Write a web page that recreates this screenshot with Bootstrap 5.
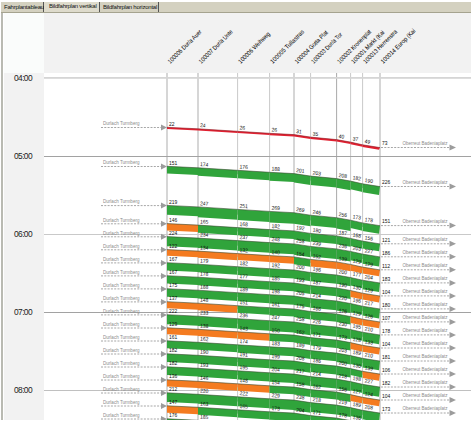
<!DOCTYPE html>
<html lang="de">
<head>
<meta charset="utf-8">
<meta name="viewport" content="width=device-width, initial-scale=1">
<title>Bildfahrplan vertikal</title>
<link href="https://cdn.jsdelivr.net/npm/bootstrap@5.3.0/dist/css/bootstrap.min.css" rel="stylesheet">
<style>
body{font-family:"Liberation Sans",Arial,sans-serif;background:#fff}
.app{width:471px;height:420px;padding:2px 0 0 1px}
.tabbar{height:11px;background:#d4d1c0;border-bottom:1px solid #a5a38f;font-size:6px;letter-spacing:-.23px;color:#111}
.tabbar .nav-link{padding:1px 0 0 3px;height:10px;color:#111;border-right:1px solid #555;white-space:nowrap;line-height:9px}
.tabbar .nav-link.active{background:#dedbcc;padding:0 0 0 5px}
.tab-a{width:43px}.tab-b{width:56px}.tab-c{width:59px}
.workspace{border-left:2px solid #b9bab2;height:407px}
.times{width:40px;margin-left:1px;background:#f2f2f2}
.corner{height:60px;background:#fafcfb}
.hour{height:78.1px;font-size:8.4px;line-height:10px;color:#222;text-align:center;letter-spacing:-.6px;padding-right:2px}
.stations{height:60px;background:#f2f2f2}
svg{display:block}
svg text{font-family:"Liberation Sans",Arial,sans-serif}
</style>
<script src="https://cdn.jsdelivr.net/npm/bootstrap@5.3.0/dist/js/bootstrap.bundle.min.js"></script>
</head>
<body>
<main class="app overflow-hidden">
  <nav class="nav tabbar flex-nowrap">
    <a class="nav-link tab-a" href="#">Fahrplantableau</a>
    <a class="nav-link tab-b active" href="#">Bildfahrplan vertikal</a>
    <a class="nav-link tab-c" href="#">Bildfahrplan horizontal</a>
  </nav>
  <div class="workspace d-flex overflow-hidden">
    <div class="times flex-shrink-0">
      <div class="corner"></div>
      <div class="hour">04:00</div><div class="hour">05:00</div><div class="hour">06:00</div><div class="hour">07:00</div><div class="hour">08:00</div>
    </div>
    <div class="flex-grow-1">
      <div class="stations"><svg id="heads" width="427" height="60" viewBox="44 13 427 60"></svg></div>
      <svg id="plan" width="427" height="347" viewBox="44 73 427 347"></svg>
    </div>
  </div>
</main>
<script>
const NS = 'http://www.w3.org/2000/svg';
const heads = document.getElementById('heads'), plan = document.getElementById('plan');
function add(parent, tag, attrs, text) {
  const e = document.createElementNS(NS, tag);
  for (const k in attrs) e.setAttribute(k, attrs[k]);
  if (text !== undefined) e.textContent = text;
  parent.appendChild(e);
}
const X = [167, 198, 237.5, 269.5, 294, 310.5, 336.5, 350.5, 362.5, 380];
const DROP = [0, 1.5, 4, 6, 7.3, 9.8, 12.3, 14.8, 17.5, 20.3];
const BOTTOM = 420;
const names = ['100006 Dur/a Auer', '100007 Dur/a Unte', '100006 Weihweg', '100005 Tullastras', '100004 Gotta Plat',
  '100003 Dur/a Tor', '100002 Kronenplat', '100001 Markt (Kai', '100013 Herrenstra', '100014 Europ (Kai'];
const lens = [45, 45, 42, 45, 44, 41, 45, 44, 45, 46];
names.forEach((n, i) => add(heads, 'text', {transform: `translate(${X[i] + 3.3} 64) rotate(-45)`, 'font-size': 6.3, fill: '#000',
  textLength: lens[i], lengthAdjust: 'spacingAndGlyphs'}, n));

/* station verticals and hour lines */
X.forEach((x, i) => {
  const wide = [0, 1, 4, 9].includes(i);
  add(plan, 'rect', {x: x - (wide ? .9 : .4), y: 73, width: wide ? 1.8 : 1, height: 347, fill: wide ? '#d2d2d2' : i === 6 ? '#aaa' : '#c9c9c9'});
});
[[77, 1.8, '#d5d5d5'], [156, 1, '#a2a2a2'], [234, 1, '#c9c9c9'], [312, 1, '#a2a2a2'], [390, 1, '#c0c0c0']].forEach(h =>
  add(plan, 'rect', {x: 44, y: h[0], width: 427, height: h[1], fill: h[2]}));

/* [start y, loads per station, orange segments] */
const runs = [
  [127.5, '22 24 26 26 31 35 40 37 49 73', []],
  [166.5, '151 174 176 188 201 203 208 182 190 226', []],
  [205.6, '219 247 251 269 269 246 256 173 178 151', []],
  [223.8, '146 165 168 182 192 180 187 168 156 121', [0]],
  [236.8, '224 234 237 248 258 239 236 203 227 186', []],
  [249.8, '122 134 132 140 154 152 139 129 129 112', [0, 1, 2, 3, 5, 6, 7, 8]],
  [262.9, '167 179 182 192 200 196 200 177 204 183', []],
  [275.9, '167 178 177 185 193 187 190 130 129 104', [7, 8]],
  [288.9, '175 188 189 198 205 214 220 196 217 180', []],
  [301.9, '137 148 151 161 175 166 176 129 126 107', [0, 1, 7, 8]],
  [314.9, '222 233 236 247 258 226 230 195 210 178', []],
  [328, '129 138 143 150 162 171 173 128 133 104', [0, 1, 2, 7, 8]],
  [341, '161 162 174 183 189 179 203 189 210 181', []],
  [354, '182 190 191 199 208 186 200 130 139 106', [8]],
  [367, '182 193 195 204 217 214 218 198 227 182', []],
  [380, '136 146 148 154 158 162 156 127 124 104', [0, 1, 2, 7, 8]],
  [393, '212 220 222 229 238 218 219 189 208 173', []],
  [406, '147 163 165 173 204 171 178 136 131 104', [0]],
  [419, '176 185 187 199 207 190 198 170 180 160', []]
];
runs.forEach(([y, vals, orange], r) => {
  const v = vals.split(' ').map(Number);
  const tone = '#9c9c9c';
  add(plan, 'text', {x: 103, y: y - 2.3, 'font-size': 5.2, fill: '#8c8c8c', textLength: 36.5, lengthAdjust: 'spacingAndGlyphs'}, 'Durlach Turmberg');
  add(plan, 'line', {x1: 101, x2: 161, y1: y, y2: y, stroke: tone, 'stroke-dasharray': '2 1.3', 'stroke-width': .9});
  add(plan, 'path', {d: `M161 ${y - 3}l6 3l-6 3z`, fill: tone});
  const end = y + 20;
  if (end < BOTTOM) {
    add(plan, 'line', {x1: 381, x2: 450, y1: end, y2: end, stroke: tone, 'stroke-dasharray': '2 1.3', 'stroke-width': .9});
    add(plan, 'path', {d: `M449.5 ${end - 3}l6.5 3l-6.5 3z`, fill: tone});
    add(plan, 'text', {x: 402.5, y: end - 2.6, 'font-size': 5.2, fill: '#8c8c8c', textLength: 45, lengthAdjust: 'spacingAndGlyphs'}, 'Oberreut Badeniaplatz');
  }
  for (let i = 0; i < 9; i++) {
    const a = y + DROP[i] - .2, b = y + DROP[i + 1] - .2, t = r ? 2 + v[i] * .034 : 1.7 + i * .05;
    const skew = i === 8 ? -1 : 0;
    add(plan, 'path', {d: `M${X[i]} ${a}L${X[i + 1]} ${b}L${X[i + 1] + skew} ${b + t}L${X[i]} ${a + t}Z`,
      fill: r ? (orange.includes(i) ? '#f47b20' : '#30a43b') : '#e02030'});
    add(plan, 'line', {x1: X[i], y1: a, x2: X[i + 1], y2: b, stroke: r ? '#3a4a32' : '#8c1820', 'stroke-width': .6});
    if (r && (i === 2 || i === 5 || i === 8))
      add(plan, 'line', {x1: X[i], x2: X[i], y1: a + t * .5, y2: a + t, stroke: '#a9d9ad', 'stroke-width': .6});
  }
});
/* load figures lie over every band */
runs.forEach(([y, vals]) => vals.split(' ').forEach((n, i) => {
  const last = i === 9;
  const base = y + (last ? 17.8 : DROP[i] - 1.9);
  if (base > BOTTOM - 1) return;
  const tilt = i > 3 && !last ? 8 : i > 0 && !last ? 3 : 0;
  add(plan, 'text', {transform: `translate(${X[i] + 2} ${base}) rotate(${tilt})`,
    'font-size': 5.4, fill: '#111', textLength: n.length * 2.75, lengthAdjust: 'spacingAndGlyphs'}, n);
}));
</script>
</body>
</html>
